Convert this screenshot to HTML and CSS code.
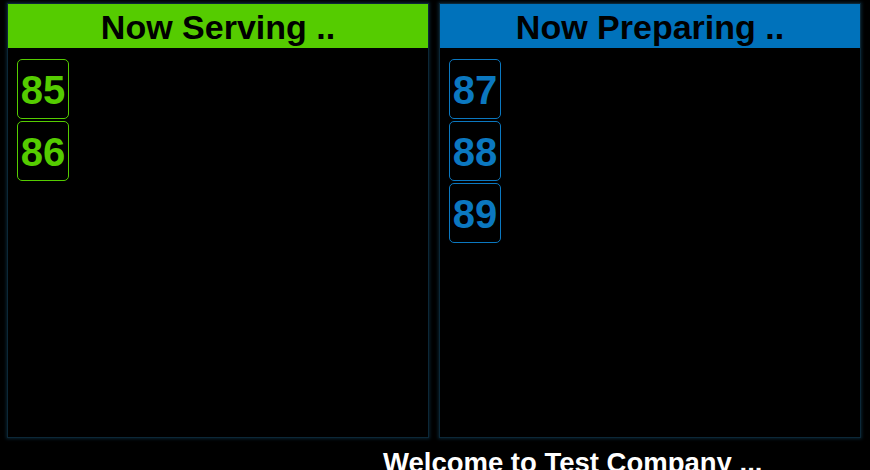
FILE: index.html
```html
<!DOCTYPE html>
<html>
<head>
<meta charset="utf-8">
<link rel="stylesheet" href="styles.css">
</head>
<body>
<div class="board">
  <section class="panel serving">
    <header class="head">Now Serving ..</header>
    <div class="list">
      <div class="num">85</div>
      <div class="num">86</div>
    </div>
  </section>
  <section class="panel preparing">
    <header class="head">Now Preparing ..</header>
    <div class="list">
      <div class="num">87</div>
      <div class="num">88</div>
      <div class="num">89</div>
    </div>
  </section>
</div>
<div class="footer">Welcome to Test Company ...</div>
</body>
</html>
```
FILE: styles.css
```css
html, body {
  margin: 0;
  padding: 0;
  background: #000;
  overflow: hidden;
  height: 470px;
  font-family: "Liberation Sans", Arial, sans-serif;
}
.board {
  display: flex;
  gap: 10px;
  padding: 3px 0 0 7px;
}
.panel {
  width: 420px;
  height: 433px;
  border: 1px solid #0c2838;
  box-shadow: 0 0 3px 1px #08202e;
  display: flex;
  flex-direction: column;
}
.head {
  height: 44px;
  line-height: 47px;
  text-align: center;
  font-weight: bold;
  font-size: 34px;
  color: #000;
}
.serving .head { background: #55cc00; }
.preparing .head { background: #0072bb; }
.list {
  display: flex;
  flex-direction: column;
  align-items: flex-start;
  gap: 2px;
  padding: 11px 0 0 9px;
}
.num {
  width: 50px;
  height: 58px;
  line-height: 60px;
  border: 1px solid;
  border-radius: 5px;
  text-align: center;
  font-size: 40px;
  font-weight: bold;
}
.serving .num { color: #55cc00; border-color: #55cc00; }
.preparing .num { color: #0b78c0; border-color: #0b78c0; }
.footer {
  padding: 9px 0 0 383px;
  color: #fff;
  font-weight: bold;
  font-size: 27.5px;
  line-height: 32px;
  white-space: nowrap;
}
```
